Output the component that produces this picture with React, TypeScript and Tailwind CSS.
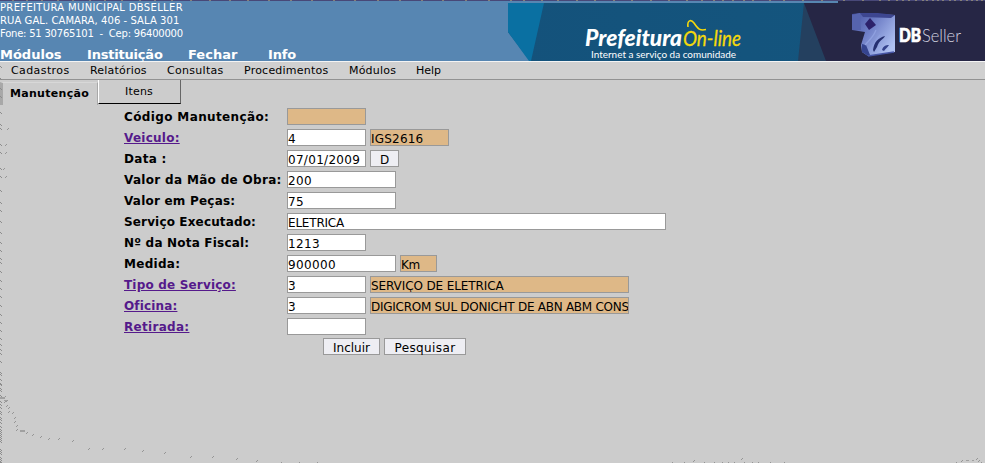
import type { ReactNode } from "react";

const sans = "font-['DejaVu_Sans',Verdana,sans-serif]";

function Field({ w, children, off = false, track = "" }: { w: string; children?: ReactNode; off?: boolean; track?: string }) {
  return (
    <div className={`${w} ${off ? "bg-[#deb887]" : "bg-white"} ${track} h-[17px] shrink-0 overflow-hidden whitespace-nowrap border border-[#999] text-[12px] leading-[18px]`}>
      {children}
    </div>
  );
}

function Row({ label, link = false, track, children }: { label: string; link?: boolean; track: string; children: ReactNode }) {
  return (
    <div className="flex h-[21px] items-start">
      <div className="w-[163px] shrink-0 whitespace-nowrap pt-px text-[12px] font-bold leading-[17px]">
        <span className={`${track} ${link ? "text-[#551a8b] underline" : ""}`}>{label}</span>
      </div>
      <div className="flex gap-[4px]">{children}</div>
    </div>
  );
}

const topTicks = [12, 26, 41, 57, 72, 89, 104, 121, 139, 154, 171, 190, 209, 229, 247, 268, 290, 311, 333, 354, 377, 399, 421, 442, 465, 488, 510, 523, 541, 557, 576, 594, 613, 631, 650, 668, 686, 701, 713, 722, 732, 743, 752, 769, 783, 802, 821, 843, 862, 879, 888, 896, 902, 908, 915, 922, 926, 932, 937, 942, 949, 954, 960, 966, 971, 976, 981];
const leftTicks = [66, 78, 88, 96, 112, 124, 128, 144, 152, 168, 176, 190, 202, 210, 221, 232, 242, 250, 258, 262, 271, 280, 288, 296, 305, 314, 322, 330, 338, 344, 349, 353, 361, 372, 374, 379, 383, 384, 388, 390, 395, 397, 401, 404, 407, 411, 413, 417, 419, 422, 426, 429, 431, 433, 435, 437, 439, 441, 449, 451, 453, 457, 459, 461, 462];
const strays = [[8, 128], [6, 144], [6, 152], [4, 168], [6, 176], [3, 397], [5, 396], [5, 401], [7, 400], [7, 405], [9, 407], [9, 411], [13, 412], [15, 417], [15, 421], [17, 425], [17, 429], [27, 432], [33, 434], [41, 436], [49, 438], [59, 438], [73, 440], [89, 448], [103, 448], [125, 448], [143, 450], [165, 452], [191, 456], [213, 456], [237, 458], [257, 460], [281, 462], [299, 462], [317, 462], [672, 462], [684, 462], [694, 460], [704, 462], [714, 462], [722, 462], [728, 462], [734, 462], [742, 458], [744, 462], [752, 462], [758, 462], [770, 462], [784, 462], [956, 462], [962, 460], [977, 458], [979, 460], [981, 462]];

function Banner() {
  return (
    <svg className="block h-[61px] w-[477px]" viewBox="508 0 477 61">
      <defs>
        <linearGradient id="cube" x1="0" y1="0" x2="1" y2=".7">
          <stop offset="0" stopColor="#4450a0" />
          <stop offset=".5" stopColor="#7484ca" />
          <stop offset="1" stopColor="#b0c2f2" />
        </linearGradient>
        <linearGradient id="teal" x1="0" x2="1">
          <stop offset="0" stopColor="#14527b" />
          <stop offset="1" stopColor="#14567f" />
        </linearGradient>
      </defs>
      <path d="M508 3H985V61H530L508 32Z" fill="url(#teal)" />
      <path d="M508 3H544L531 61H529L508 32Z" fill="#0a70a2" />
      <path d="M804 3H830V61H798Z" fill="#24405f" />
      <path d="M804 3H838V1H985V61H826Z" fill="#262645" />
      <g transform="translate(848 8)">
        <path d="M4 6L13 5L47 7L46 43L40 45L21 47L17 45L12 49L14 34L18 26L14 22L4 22Z" fill="none" />
        <path d="M4 6L13 5L47 7L47 44L20 48L14 44L13 37L17 24L4 22Z" fill="url(#cube)" />
        <path d="M4 7L12 5L13 22L4 22Z" fill="#5664ae" />
        <path d="M12 5L30 5L47 7L43 10L15 9Z" fill="#3d4690" />
        <path d="M22 10L28 17L21 22L17 16Z" fill="#2c216a" />
        <path d="M14 36L18 37L22 47L20 48L14 44Z" fill="#35448f" />
        <path d="M17 37C22 32 26 28 28 22M22 43C26 36 28 32 32 27" fill="none" stroke="#8fa0df" strokeWidth="1.3" />
        <path d="M25 42C26 34 30 30 37 28C36 31 31 32 29 39L26 44Z" fill="#263071" />
        <path d="M34 42C35 38 38 37 41 37C39 40 37 41 36 43Z" fill="#34428c" />
        <path d="M20 48L46 44" fill="none" stroke="#4655a4" strokeWidth="1.5" />
      </g>
      <g fontFamily="Lato, sans-serif" fill="white">
        <text x="585" y="46" fontSize="22" fontWeight="900" fontStyle="italic">
          <tspan textLength="97" lengthAdjust="spacingAndGlyphs">Prefeitura</tspan>
          <tspan x="683" fontWeight="400" fill="#f5d90b" stroke="#f5d90b" strokeWidth=".3" textLength="58" lengthAdjust="spacingAndGlyphs">On-line</tspan>
        </text>
        <text x="591" y="57.5" fontSize="10" textLength="145" lengthAdjust="spacingAndGlyphs">Internet a serviço da comunidade</text>
      </g>
      <path d="M688 27C687 20 691 19 694 23C698 29 700 31 706 29.5" fill="none" stroke="#f5d90b" strokeWidth="1.6" />
      <text x="899" y="42" fontFamily="Lato, sans-serif" fontSize="18">
        <tspan fontWeight="900" fill="white" stroke="white" strokeWidth=".7" textLength="22" lengthAdjust="spacingAndGlyphs">DB</tspan>
        <tspan x="922" fontWeight="300" fill="#d4d4e0" textLength="39" lengthAdjust="spacingAndGlyphs">Seller</tspan>
      </text>
    </svg>
  );
}

export default function App() {
  return (
    <div className={`${sans} relative h-[463px] w-[985px] overflow-hidden bg-[#ccc] text-black`}>
      <header className="flex h-[61px] justify-between bg-[#5786b2] text-white">
        <div className="w-[508px] whitespace-nowrap">
          <div className="flex h-[44px] flex-col pt-px text-[10px] leading-[13px]">
            <span className="tracking-[0.34px]">PREFEITURA MUNICIPAL DBSELLER</span>
            <span className="tracking-[0.07px]">RUA GAL. CAMARA, 406 - SALA 301</span>
            <span className="whitespace-pre tracking-[-0.22px]">Fone: 51 30765101  -  Cep: 96400000</span>
          </div>
          <nav className="flex pt-[2px] text-[13px] font-bold leading-[17px]">
            <span className="w-[87px]">Módulos</span>
            <span className="w-[101px] tracking-[-0.2px]">Instituição</span>
            <span className="w-[80px]">Fechar</span>
            <span className="tracking-[-0.2px]">Info</span>
          </nav>
        </div>
        <Banner />
      </header>

      <nav className="flex h-[19px] border-t border-b border-t-[#f4f4f4] border-b-[#929292] bg-[#d0d0d0] pl-[11px] text-[11px] leading-[17px]">
        <span className="w-[79px] tracking-[0.4px]">Cadastros</span>
        <span className="w-[77px] tracking-[0.2px]">Relatórios</span>
        <span className="w-[77px] tracking-[0.3px]">Consultas</span>
        <span className="w-[105px] tracking-[0.22px]">Procedimentos</span>
        <span className="w-[67px] tracking-[0.2px]">Módulos</span>
        <span>Help</span>
      </nav>

      <div className="flex h-[28px] items-start">
        <div className="mt-[2px] h-[23px] w-[98px] whitespace-nowrap border-l-[3px] border-r border-t border-[#a8a8a8] border-t-[#d8d8d8] pl-[7px] text-[11px] font-bold leading-[22px] tracking-[0.3px]">Manutenção</div>
        <div className="h-[24px] w-[83px] border-b border-l border-r border-b-black border-l-white border-r-[#666] pr-px text-center text-[11px] leading-[24px] tracking-[0.2px]">Itens</div>
      </div>

      <main className="pl-[124px]">
        <Row label="Código Manutenção:" track="tracking-[0.37px]"><Field w="w-[79px]" off /></Row>
        <Row label="Veiculo:" link track="tracking-[0.25px]">
          <Field w="w-[79px]">4</Field>
          <Field w="w-[79px]" off track="tracking-[0.2px]">IGS2616</Field>
        </Row>
        <Row label="Data :" track="tracking-[0.3px]">
          <Field w="w-[79px]" track="tracking-[0.3px]">07/01/2009</Field>
          <button className="h-[17px] w-[29px] border border-[#999] bg-[#eeeef3] text-[12px] leading-[18px]">D</button>
        </Row>
        <Row label="Valor da Mão de Obra:" track="tracking-[0.32px]"><Field w="w-[109px]" track="tracking-[0.37px]">200</Field></Row>
        <Row label="Valor em Peças:" track="tracking-[0.22px]"><Field w="w-[109px]" track="tracking-[0.37px]">75</Field></Row>
        <Row label="Serviço Executado:" track="tracking-[0.15px]"><Field w="w-[379px]" track="tracking-[-0.2px]">ELETRICA</Field></Row>
        <Row label="Nº da Nota Fiscal:" track="tracking-[0.2px]"><Field w="w-[79px]" track="tracking-[0.37px]">1213</Field></Row>
        <Row label="Medida:" track="tracking-[0.3px]">
          <Field w="w-[109px]" track="tracking-[0.37px]">900000</Field>
          <Field w="w-[37px]" off track="tracking-[-0.3px]">Km</Field>
        </Row>
        <Row label="Tipo de Serviço:" link track="tracking-[0.18px]">
          <Field w="w-[79px]">3</Field>
          <Field w="w-[259px]" off track="tracking-[-0.1px]">SERVIÇO DE ELETRICA</Field>
        </Row>
        <Row label="Oficina:" link track="tracking-[0.15px]">
          <Field w="w-[79px]">3</Field>
          <Field w="w-[259px]" off track="tracking-[-0.27px]">DIGICROM SUL DONICHT DE ABN ABM CONSTRUTORA</Field>
        </Row>
        <Row label="Retirada:" link track="tracking-[0.3px]"><Field w="w-[79px]" /></Row>
        <div className="-mt-px flex gap-[4px] pl-[199px] text-[12px] leading-[18px]">
          <button className="h-[17px] w-[57px] border border-[#999] bg-[#eeeef3]">Incluir</button>
          <button className="h-[17px] w-[82px] border border-[#999] bg-[#eeeef3] tracking-[0.4px]">Pesquisar</button>
        </div>
      </main>

      <svg className="pointer-events-none absolute inset-0 h-[463px] w-[985px]" viewBox="0 0 985 463" shapeRendering="crispEdges">
        <rect width="985" height="1" fill="#484878" />
        {topTicks.map((x) => <rect key={x} x={x} y="0" width="2" height="1" fill="#858078" />)}
        {leftTicks.map((y) => <path key={y} d={`M0 ${y}h1v1h1v1h-1v-1h-1z`} fill="#8c8c8c" />)}
        {strays.map(([x, y]) => <path key={`${x}-${y}`} d={`M${x} ${y}h1v1h-1zM${x - 1} ${y + 1}h1v1h-1z`} fill="#959595" />)}
        <rect x="20" y="430" width="5" height="2" fill="#a0a0a0" />
        <path d="M0 397h5v2h-5zM4 400h3v1h-3zM966 460h3v1h-3zM972 460h2v1h-2z" fill="#a0a0a0" />
      </svg>
    </div>
  );
}
